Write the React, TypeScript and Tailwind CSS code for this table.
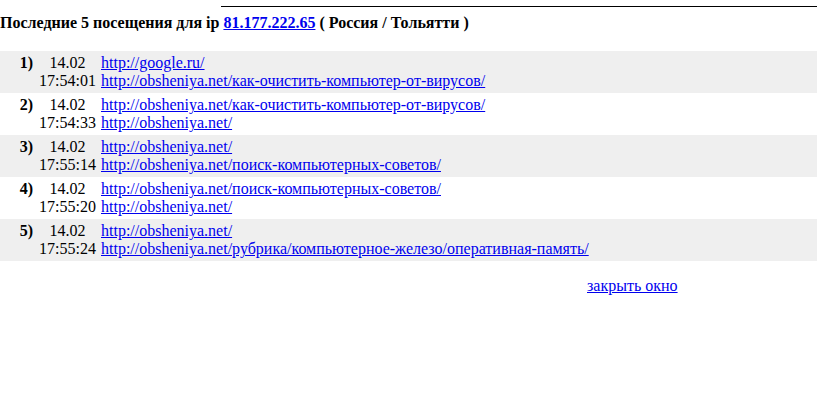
import React from 'react';

type Visit = { n: number; date: string; time: string; from: string; to: string };

const VISITS: Visit[] = [
    { n: 1, date: '14.02', time: '17:54:01', from: 'http://google.ru/', to: 'http://obsheniya.net/как-очистить-компьютер-от-вирусов/' },
    { n: 2, date: '14.02', time: '17:54:33', from: 'http://obsheniya.net/как-очистить-компьютер-от-вирусов/', to: 'http://obsheniya.net/' },
    { n: 3, date: '14.02', time: '17:55:14', from: 'http://obsheniya.net/', to: 'http://obsheniya.net/поиск-компьютерных-советов/' },
    { n: 4, date: '14.02', time: '17:55:20', from: 'http://obsheniya.net/поиск-компьютерных-советов/', to: 'http://obsheniya.net/' },
    { n: 5, date: '14.02', time: '17:55:24', from: 'http://obsheniya.net/', to: 'http://obsheniya.net/рубрика/компьютерное-железо/оперативная-память/' },
];

const App: React.FC = () => {
    return (
        <div className="w-[817px] h-[409px] bg-white text-black text-[16px] leading-[18px] font-['Liberation_Serif','Times_New_Roman',serif]">
            {/* top rule */}
            <div className="pt-[6px] pl-[221px]">
                <div className="h-px bg-black" />
            </div>

            <h1 className="mt-[7px] font-bold">
                Последние 5 посещения для ip <a href="#" className="text-[#0000ee] underline">81.177.222.65</a> ( Россия / Тольятти )
            </h1>

            <div className="mt-[19px] flex flex-col">
                {VISITS.map((v, i) => (
                    <div
                        key={v.n}
                        className={`grid grid-cols-[36px_63px_1fr] py-[3px] h-[42px] ${i % 2 === 0 ? 'bg-[#efefef]' : 'bg-white'}`}
                    >
                        <div className="text-right pr-[3px] font-bold">{v.n})</div>
                        <div className="text-center">
                            <div>{v.date}</div>
                            <div>{v.time}</div>
                        </div>
                        <div className="pl-[2px] whitespace-nowrap">
                            <div><a href="#" className="text-[#0000ee] underline">{v.from}</a></div>
                            <div><a href="#" className="text-[#0000ee] underline">{v.to}</a></div>
                        </div>
                    </div>
                ))}
            </div>

            <div className="mt-[16px] pl-[587px]">
                <a href="#" className="text-[#0000ee] underline">закрыть окно</a>
            </div>
        </div>
    );
};

export default App;
